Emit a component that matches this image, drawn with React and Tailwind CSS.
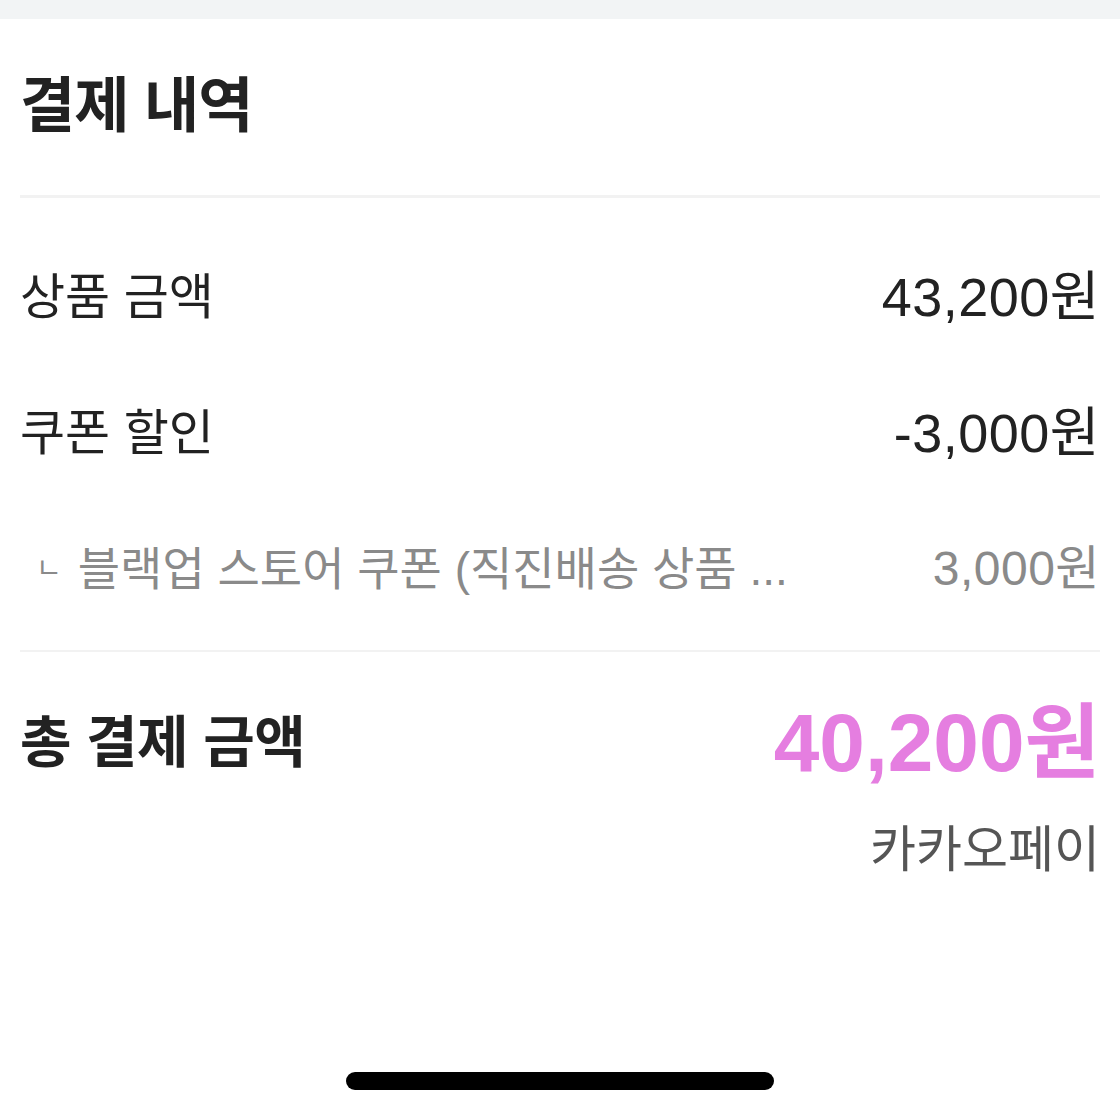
export default function App() {
  const font = { fontFamily: '"Liberation Sans", "Noto Sans CJK KR", sans-serif' };
  return (
    <div className="w-[1120px] h-[1120px] bg-white flex flex-col" style={font}>
      <div className="h-[19px] bg-[#f2f4f5] shrink-0" />
      <div className="px-[20px] flex flex-col flex-1">
        <div className="h-[176px] flex items-center">
          <h1 className="text-[60px] font-bold text-[#222] leading-none tracking-[-1px]">결제 내역</h1>
        </div>
        <div className="h-[3px] bg-[#f2f2f2]" />
        <div className="pt-[31px] pb-[13px] flex flex-col">
          <div className="h-[136px] flex items-center justify-between">
            <span className="text-[49px] text-[#222] leading-none">상품 금액</span>
            <span className="text-[54px] text-[#222] leading-none tracking-[0.5px]">43,200원</span>
          </div>
          <div className="h-[136px] flex items-center justify-between">
            <span className="text-[49px] text-[#222] leading-none">쿠폰 할인</span>
            <span className="text-[54px] text-[#222] leading-none tracking-[0.5px]">-3,000원</span>
          </div>
          <div className="h-[136px] flex items-center justify-between">
            <span className="pl-[16px] text-[46px] text-[#8a8a8a] leading-none whitespace-nowrap flex items-center">
              <span className="text-[28px] mr-[16px]">ㄴ</span>
              <span>블랙업 스토어 쿠폰 (직진배송 상품 ...</span>
            </span>
            <span className="text-[48px] text-[#8a8a8a] leading-none tracking-[0.5px]">3,000원</span>
          </div>
        </div>
        <div className="h-[2px] bg-[#f2f2f2]" />
        <div className="pt-[45px] flex flex-col">
          <div className="h-[92px] flex items-center justify-between">
            <span className="text-[56px] font-bold text-[#222] leading-none tracking-[-0.5px]">총 결제 금액</span>
            <span className="text-[82px] font-bold text-[#e57ee0] leading-none">40,200원</span>
          </div>
          <div className="h-[60px] mt-[31px] flex items-center justify-end">
            <span className="text-[50px] text-[#555] leading-none">카카오페이</span>
          </div>
        </div>
        <div className="flex-1" />
        <div className="flex justify-center pb-[30px]">
          <div className="w-[428px] h-[18px] rounded-full bg-black" />
        </div>
      </div>
    </div>
  );
}
